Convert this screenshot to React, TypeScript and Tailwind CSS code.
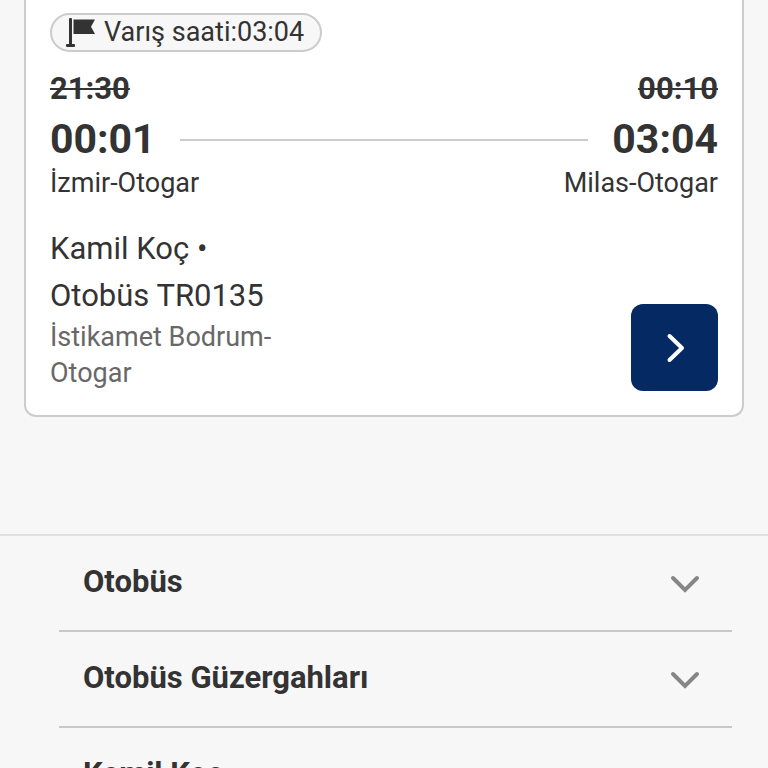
import { ReactNode } from "react";

const links = ["Otobüs", "Otobüs Güzergahları", "Kamil Koç"];

function FlagIcon() {
  return (
    <svg className="w-8 h-8 shrink-0" viewBox="0 0 32 32" fill="#333333" aria-hidden="true">
      <rect x="5" y="1" width="3" height="28" rx="1" />
      <rect x="2" y="27" width="9" height="3" rx="1" />
      <path d="M9.500 2.500H31l-4 7.200 4 7.300H9.500z" />
    </svg>
  );
}

function Badge({ children }: { children: ReactNode }) {
  return (
    <div className="inline-flex h-[39px] items-center gap-2 self-start rounded-full border-2 border-[#cccccc] bg-[#f7f7f7] pl-3 pr-4 text-[27px] leading-9">
      {children}
    </div>
  );
}

export default function App() {
  return (
    <main
      className="h-screen overflow-hidden bg-[#f7f7f7] text-[#333333]"
      style={{ fontFamily: 'Roboto, "Liberation Sans", sans-serif' }}
    >
      <article className="mx-6 flex flex-col rounded-b-xl border-2 border-t-0 border-[#cccccc] bg-white px-6 pt-[13px] pb-6">
        <Badge>
          <FlagIcon />
          <span className="pb-0.5">Varış saati:03:04</span>
        </Badge>

        <div className="mt-[19px] flex justify-between text-[31px] leading-9 font-bold">
          <s className="decoration-2">21:30</s>
          <s className="decoration-2">00:10</s>
        </div>
        <div className="mt-[7px] flex items-center gap-6 text-[41px] leading-[50px]">
          <strong className="font-bold">00:01</strong>
          <div className="mt-0.5 h-0.5 grow bg-[#cccccc]" />
          <strong className="font-bold">03:04</strong>
        </div>
        <div className="mt-px flex justify-between text-[27px] leading-9">
          <span>İzmir-Otogar</span>
          <span>Milas-Otogar</span>
        </div>

        <div className="mt-6 flex items-end justify-between">
          <div className="w-60">
            <p className="text-[31px] leading-[47px]">
              Kamil Koç •<br />
              Otobüs TR0135
            </p>
            <p className="text-[27px] leading-9 text-[#686868]">İstikamet Bodrum-Otogar</p>
          </div>
          <button
            type="button"
            aria-label="Detaylar"
            className="flex size-[87px] items-center justify-center rounded-xl bg-[#052962]"
          >
            <svg className="size-8" viewBox="0 0 32 32" fill="none" stroke="#ffffff" strokeWidth="4" strokeLinecap="round" strokeLinejoin="round">
              <path d="M10.500 4l12.500 12-12.500 12" />
            </svg>
          </button>
        </div>
      </article>

      <footer className="mt-[117px] border-t-2 border-[#dfdfdf]">
        <ul className="ml-[59px] mr-9">
          {links.map((title) => (
            <li key={title} className="border-b-2 border-[#c8c8c8]">
              <button type="button" className="flex h-[94px] w-full items-center justify-between pl-6 pr-[31px] text-left">
                <span className="pb-0.5 text-[31px] leading-9 font-bold">{title}</span>
                <svg className="size-8" viewBox="0 0 32 32" fill="none" stroke="#868686" strokeWidth="4" strokeLinecap="round">
                  <path d="M4 11l12 12 12-12" />
                </svg>
              </button>
            </li>
          ))}
        </ul>
      </footer>
    </main>
  );
}
